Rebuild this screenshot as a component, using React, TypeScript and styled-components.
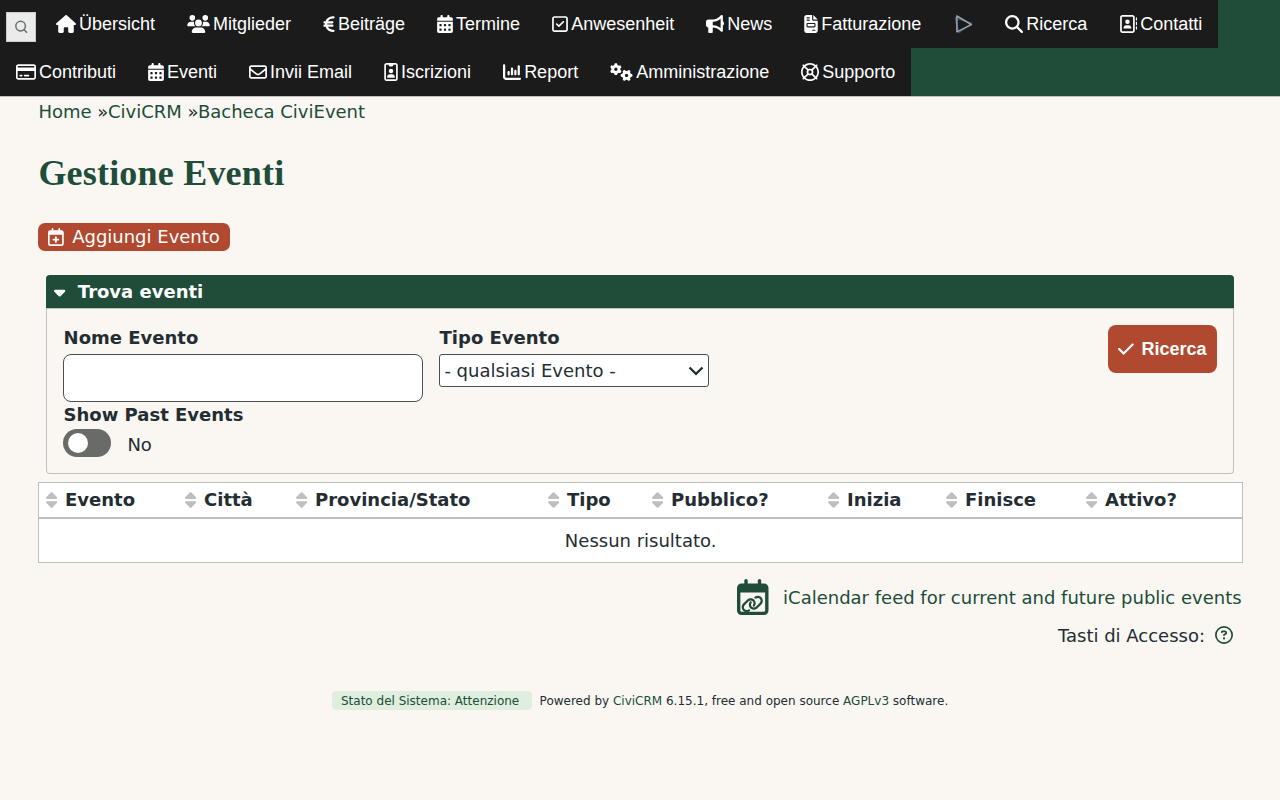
import React from 'react';
import styled, { createGlobalStyle } from 'styled-components';
import type { IconType } from 'react-icons';
import {
  FaHouse, FaUsers, FaEuroSign, FaCalendarDays, FaRegSquareCheck, FaBullhorn, FaFileInvoice,
  FaMagnifyingGlass, FaRegAddressBook, FaRegCreditCard, FaRegEnvelope, FaRegIdBadge, FaChartColumn,
  FaGears, FaRegLifeRing, FaCaretDown, FaCheck, FaSort, FaRegCalendar, FaLink,
  FaRegCircleQuestion,
} from 'react-icons/fa6';

const green = '#204d39';
const rust = '#b0492f';
const ink = '#232d33';
const line = '#bfbfbf';

const GlobalStyle = createGlobalStyle`
  * { box-sizing: border-box; }
  body {
    margin: 0;
    background: #faf7f2;
    color: ${ink};
    font: 18px/27px "DejaVu Sans", sans-serif;
  }
  a { color: ${green}; text-decoration: none; }
`;

const MenuBar = styled.nav`
  height: 97px;
  background: ${green};
  border-bottom: 1px solid ${line};
`;
const MenuRow = styled.div`
  display: flex;
  width: max-content;
  height: 48px;
  background: #1b1b1b;
`;
const SearchCell = styled.div`
  width: 40px;
  padding: 12px 0 0 6px;
`;
const QuickSearch = styled.button`
  display: flex;
  align-items: center;
  justify-content: center;
  width: 30px;
  height: 30px;
  padding: 0;
  border: 1px solid #ccc;
  background: #ebebeb;
`;
const MenuLink = styled.a`
  display: flex;
  align-items: center;
  gap: 3px;
  padding: 0 16px;
  color: #fff;
  font: 18px/48px "Liberation Sans", Arial, sans-serif;
  white-space: nowrap;
`;
const Glyph = styled.span<{ $w: number; $size?: number }>`
  display: inline-flex;
  flex: none;
  width: ${p => p.$w}px;
  svg { display: block; width: ${p => p.$w}px; height: ${p => p.$size ?? 18}px; }
`;

const Page = styled.main`
  padding: 1px 37.4px 0 38.4px;
`;
const Breadcrumb = styled.div`
  height: 27px;
`;
const Title = styled.h1`
  margin: 26px 0 28px;
  color: ${green};
  font: bold 36px/44px "Liberation Serif", serif;
  letter-spacing: 0.2px;
`;
const AddButton = styled.a`
  display: flex;
  align-items: center;
  gap: 8px;
  width: 192px;
  height: 28px;
  padding: 0 0 1px 10px;
  border-radius: 7px;
  background: ${rust};
  && { color: #fff; }
`;
const Panel = styled.section`
  margin: 24px 8.6px 8px 7.6px;
  border: 1px solid ${line};
  border-top: 0;
  border-radius: 4px;
`;
const PanelHeader = styled.h2`
  display: flex;
  align-items: center;
  gap: 12.3px;
  height: 34px;
  margin: 0 -1px;
  padding-left: 8.3px;
  border-bottom: 1px solid ${line};
  border-radius: 4px 4px 0 0;
  background: ${green};
  color: #fff;
  font-size: 18px;
`;
const PanelBody = styled.div`
  display: flex;
  align-items: flex-start;
  gap: 16px;
  height: 164px;
  padding: 16px;
`;
const Field = styled.div<{ $w: number }>`
  width: ${p => p.$w}px;
`;
const Label = styled.label<{ $h?: number }>`
  display: block;
  height: ${p => p.$h ?? 29}px;
  padding-left: 0.6px;
  line-height: 26px;
  font-weight: bold;
`;
const TextInput = styled.input`
  display: block;
  width: 360px;
  height: 48px;
  border: 1px solid #4a5054;
  border-radius: 8px;
  background: #fff;
`;
const SelectBox = styled.div`
  display: flex;
  align-items: center;
  justify-content: space-between;
  height: 33px;
  padding: 0 4px 0 4.4px;
  border: 1px solid #4a5054;
  border-radius: 3px;
  background: #fff;
`;
const ToggleRow = styled.div`
  display: flex;
  gap: 16.4px;
  line-height: 31px;
`;
const Toggle = styled.span`
  width: 48px;
  height: 28px;
  padding: 4px 5px;
  border-radius: 14px;
  background: #686b67;
  &::before {
    content: '';
    display: block;
    width: 20px;
    height: 20px;
    border-radius: 50%;
    background: #fff;
  }
`;
const SubmitButton = styled.button`
  display: flex;
  align-items: center;
  gap: 7.8px;
  width: 109px;
  height: 48px;
  margin-left: auto;
  padding: 0 0 0 10px;
  border: 0;
  border-radius: 8px;
  background: ${rust};
  color: #fff;
  font: bold 18px "Liberation Sans", Arial, sans-serif;
`;
const Table = styled.table`
  width: 1205px;
  table-layout: fixed;
  border-spacing: 0;
  border: 1px solid ${line};
  background: #fff;
`;
const Th = styled.th<{ $w: number }>`
  width: ${p => p.$w}px;
  height: 36px;
  padding: 0 0 1px 7.1px;
  border-bottom: 2px solid ${line};
  text-align: left;
`;
const SortLabel = styled.span`
  display: flex;
  align-items: center;
  gap: 7.3px;
  svg { color: ${line}; }
`;
const Empty = styled.td`
  height: 43px;
  padding: 0 0.5px 0 0;
  text-align: center;
`;
const FeedLink = styled.a`
  display: flex;
  align-items: center;
  justify-content: flex-end;
  gap: 14px;
  height: 36px;
  margin: 16px 1px 0 0;
`;
const FeedIcon = styled.span`
  position: relative;
  width: 32px;
  height: 37px;
`;
const FeedBadge = styled.span`
  position: absolute;
  left: 4px;
  top: 14px;
`;
const AccessKeys = styled.div`
  display: flex;
  align-items: center;
  justify-content: flex-end;
  gap: 10px;
  margin: 7px 9.6px 0 0;
  svg { margin-top: -1px; color: ${green}; }
`;
const Footer = styled.footer`
  display: flex;
  justify-content: center;
  gap: 7.4px;
  margin: 42px 0.6px 0 0;
  font-size: 12px;
  line-height: 20px;
`;
const Status = styled.a`
  width: 200px;
  height: 19px;
  padding-left: 8.8px;
  border-radius: 4px;
  background: #dfeede;
`;

type Entry = { label: string; icon?: IconType; w: number };

const topRow: Entry[] = [
  { label: 'Übersicht', icon: FaHouse, w: 20 },
  { label: 'Mitglieder', icon: FaUsers, w: 23 },
  { label: 'Beiträge', icon: FaEuroSign, w: 12 },
  { label: 'Termine', icon: FaCalendarDays, w: 16 },
  { label: 'Anwesenheit', icon: FaRegSquareCheck, w: 16 },
  { label: 'News', icon: FaBullhorn, w: 18 },
  { label: 'Fatturazione', icon: FaFileInvoice, w: 14 },
  { label: '', w: 20 },
  { label: 'Ricerca', icon: FaMagnifyingGlass, w: 18 },
  { label: 'Contatti', icon: FaRegAddressBook, w: 18 },
];
const bottomRow: Entry[] = [
  { label: 'Contributi', icon: FaRegCreditCard, w: 20 },
  { label: 'Eventi', icon: FaCalendarDays, w: 16 },
  { label: 'Invii Email', icon: FaRegEnvelope, w: 18 },
  { label: 'Iscrizioni', icon: FaRegIdBadge, w: 14 },
  { label: 'Report', icon: FaChartColumn, w: 18 },
  { label: 'Amministrazione', icon: FaGears, w: 23 },
  { label: 'Supporto', icon: FaRegLifeRing, w: 18 },
];
const columns: [string, number][] = [
  ['Evento', 139], ['Città', 111], ['Provincia/Stato', 252], ['Tipo', 104],
  ['Pubblico?', 176], ['Inizia', 118], ['Finisce', 140], ['Attivo?', 163],
];

const PlayOutline = () => (
  <svg viewBox="0 0 20 18" fill="none" strokeLinejoin="round">
    <path d="M2.2 2.8 5.8 17.8 18.6 8.2Z" stroke="#215590" strokeWidth="1.4" />
    <path d="M3.9 1V16.8L18.4 9.6Z" stroke="#a5a49b" strokeWidth="1.5" />
  </svg>
);

const CalendarPlus = () => (
  <svg viewBox="0 0 448 512" fill="currentColor" stroke="none">
    <path
      fillRule="evenodd"
      d="M64 64H384a64 64 0 0 1 64 64V448a64 64 0 0 1-64 64H64a64 64 0 0 1-64-64V128a64 64 0 0 1 64-64ZM48 192V448a16 16 0 0 0 16 16H384a16 16 0 0 0 16-16V192Z"
    />
    <path
      d="M128 24V90M320 24V90M224 256V400M152 328H296"
      fill="none"
      stroke="currentColor"
      strokeWidth="48"
      strokeLinecap="round"
    />
  </svg>
);

const MenuItem = ({ label, icon: Icon, w }: Entry) => (
  <MenuLink href="#">
    <Glyph $w={w}>{Icon ? <Icon /> : <PlayOutline />}</Glyph>
    {label}
  </MenuLink>
);

export default function App() {
  return (
    <>
      <GlobalStyle />
      <MenuBar>
        <MenuRow>
          <SearchCell>
            <QuickSearch aria-label="Ricerca">
              <svg width="14" height="14" viewBox="0 0 14 14" fill="none" stroke="#686e68" strokeWidth="1.5">
                <circle cx="6.6" cy="6.1" r="4.8" />
                <path d="m10 9.6 3 3.2" />
              </svg>
            </QuickSearch>
          </SearchCell>
          {topRow.map(e => <MenuItem key={e.label} {...e} />)}
        </MenuRow>
        <MenuRow>{bottomRow.map(e => <MenuItem key={e.label} {...e} />)}</MenuRow>
      </MenuBar>
      <Page>
        <Breadcrumb>
          <a href="#">Home</a> »<a href="#">CiviCRM</a> »<a href="#">Bacheca CiviEvent</a>
        </Breadcrumb>
        <Title>Gestione Eventi</Title>
        <AddButton href="#">
          <Glyph $w={15.75}><CalendarPlus /></Glyph>Aggiungi Evento
        </AddButton>
        <Panel>
          <PanelHeader><Glyph $w={11.25}><FaCaretDown /></Glyph>Trova eventi</PanelHeader>
          <PanelBody>
            <Field $w={360}>
              <Label>Nome Evento</Label>
              <TextInput />
              <Label $h={27}>Show Past Events</Label>
              <ToggleRow><Toggle />No</ToggleRow>
            </Field>
            <Field $w={270}>
              <Label>Tipo Evento</Label>
              <SelectBox>
                - qualsiasi Evento -
                <svg width="16" height="10" viewBox="0 0 16 10" fill="none" stroke={ink} strokeWidth="2.3">
                  <path d="m1.5 1.5 6.5 6.3 6.5-6.3" />
                </svg>
              </SelectBox>
            </Field>
            <SubmitButton><Glyph $w={15.75}><FaCheck /></Glyph>Ricerca</SubmitButton>
          </PanelBody>
        </Panel>
        <Table>
          <thead>
            <tr>
              {columns.map(([name, w]) => (
                <Th key={name} $w={w}>
                  <SortLabel><Glyph $w={11.25}><FaSort /></Glyph>{name}</SortLabel>
                </Th>
              ))}
            </tr>
          </thead>
          <tbody><tr><Empty colSpan={8}>Nessun risultato.</Empty></tr></tbody>
        </Table>
        <FeedLink href="#">
          <FeedIcon>
            <Glyph $w={31.5} $size={36}><FaRegCalendar /></Glyph>
            <FeedBadge><Glyph $w={22.5}><FaLink /></Glyph></FeedBadge>
          </FeedIcon>
          iCalendar feed for current and future public events
        </FeedLink>
        <AccessKeys>Tasti di Accesso: <Glyph $w={18}><FaRegCircleQuestion /></Glyph></AccessKeys>
        <Footer>
          <Status href="#">Stato del Sistema: Attenzione</Status>
          <span>Powered by <a href="#">CiviCRM</a> 6.15.1, free and open source <a href="#">AGPLv3</a> software.</span>
        </Footer>
      </Page>
    </>
  );
}
